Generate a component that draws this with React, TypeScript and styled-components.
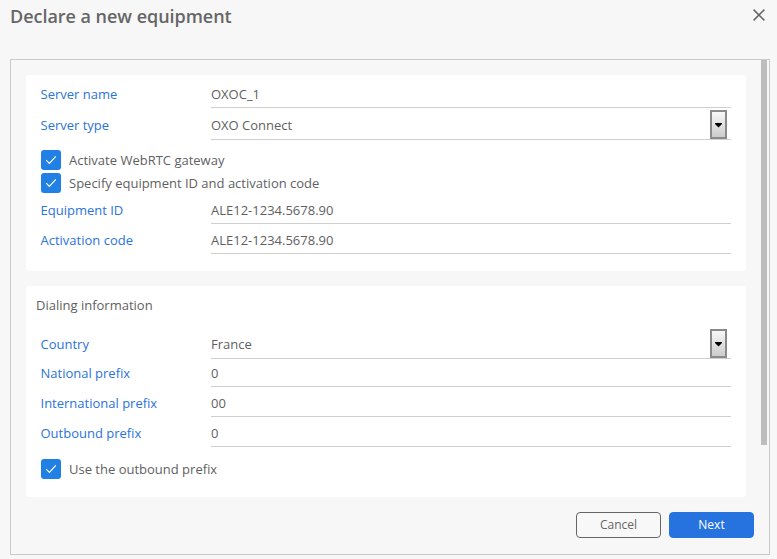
import React from 'react';
import styled, { createGlobalStyle } from 'styled-components';

const GlobalStyle = createGlobalStyle`
  html, body {
    margin: 0;
    padding: 0;
    background: #f7f7f7;
    overflow: hidden;
  }
  * {
    box-sizing: border-box;
  }
`;

const CheckRow = ({ label, top }: { label: string; top: number }) => (
  <Check $top={top}>
    <CheckBox>
      <svg width="12" height="10" viewBox="0 0 12 10" fill="none">
        <path d="M1.2 5.2 L4.4 8.4 L10.8 1.4" stroke="#fff" strokeWidth="1.2" />
      </svg>
    </CheckBox>
    <CheckLabel>{label}</CheckLabel>
  </Check>
);

const Field = ({ label, value, height, select }: { label: string; value: string; height: number; select?: boolean }) => (
  <Row $height={height}>
    <Label $select={select}>{label}</Label>
    <Value $select={select}>
      <span>{value}</span>
      {select && (
        <SelectButton>
          <svg width="7" height="5" viewBox="0 0 7 5">
            <path d="M0 0 H7 V1 L3.5 4.5 L0 1 Z" fill="#000" />
          </svg>
        </SelectButton>
      )}
    </Value>
  </Row>
);

const App = () => {
  return (
    <Page>
      <GlobalStyle />
      <Header>
        <Title>Declare a new equipment</Title>
        <CloseIcon width="12" height="12" viewBox="0 0 12 12">
          <path d="M0.6 0.6 L11.4 11.4 M11.4 0.6 L0.6 11.4" stroke="#666" strokeWidth="1.5" />
        </CloseIcon>
      </Header>
      <Panel>
        <ScrollThumb />
        <Content>
          <Card>
            <Field label="Server name" value="OXOC_1" height={33} />
            <Field label="Server type" value="OXO Connect" height={32} select />
            <Checks>
              <CheckRow label="Activate WebRTC gateway" top={10} />
              <CheckRow label="Specify equipment ID and activation code" top={3} />
            </Checks>
            <Field label="Equipment ID" value="ALE12-1234.5678.90" height={31} />
            <Field label="Activation code" value="ALE12-1234.5678.90" height={30} />
            <CardEnd $height={17} />
          </Card>
          <Card>
            <SectionTitle>Dialing information</SectionTitle>
            <Field label="Country" value="France" height={30} select />
            <Field label="National prefix" value="0" height={28} />
            <Field label="International prefix" value="00" height={30} />
            <Field label="Outbound prefix" value="0" height={30} />
            <CheckRow label="Use the outbound prefix" top={12} />
            <CardEnd $height={18} />
          </Card>
        </Content>
        <Footer>
          <CancelButton>Cancel</CancelButton>
          <NextButton>Next</NextButton>
        </Footer>
      </Panel>
    </Page>
  );
};
export default App;

const Page = styled.div`
  width: 777px;
  height: 559px;
  padding: 0 7px 4px 10px;
  background: #f7f7f7;
  font-family: "Open Sans", sans-serif;
  font-size: 13px;
  color: #5f5f5f;
`;

const Header = styled.div`
  height: 59px;
  padding-top: 4px;
  display: flex;
  justify-content: space-between;
  align-items: flex-start;
`;

const Title = styled.h1`
  margin: 0;
  font-size: 18px;
  line-height: 25px;
  font-weight: 600;
  letter-spacing: -0.03px;
  color: #666;
`;

const CloseIcon = styled.svg`
  margin: 5px 5px 0 0;
`;

const Panel = styled.div`
  position: relative;
  height: 496px;
  border: 1px solid #c9c9c9;
  display: flex;
  flex-direction: column;
`;

const ScrollThumb = styled.div`
  position: absolute;
  top: 0;
  right: 2px;
  width: 6px;
  height: 385px;
  background: #bdbdbd;
`;

const Content = styled.div`
  padding: 15px 23px 0 15px;
  display: flex;
  flex-direction: column;
  gap: 15px;
`;

const Card = styled.div`
  background: #fff;
  border-radius: 3px;
  padding: 0 15px;
`;

const CardEnd = styled.div<{ $height: number }>`
  height: ${({ $height }) => $height}px;
  margin: 0 -15px;
`;

const Row = styled.div<{ $height: number }>`
  height: ${({ $height }) => $height}px;
  display: flex;
  align-items: flex-end;
`;

const Label = styled.div<{ $select?: boolean }>`
  width: 170.5px;
  margin-left: -0.5px;
  line-height: 18px;
  margin-bottom: ${({ $select }) => ($select ? 6 : 5)}px;
  color: #2b74d8;
`;

const Value = styled.div<{ $select?: boolean }>`
  flex: 1;
  height: 100%;
  border-bottom: 1px solid #cfcfcf;
  display: flex;
  justify-content: space-between;
  align-items: flex-end;
  line-height: 18px;
  padding-right: 4px;
  span {
    margin-bottom: ${({ $select }) => ($select ? 5 : 4)}px;
  }
`;

const SelectButton = styled.div`
  width: 17px;
  height: 29px;
  border: 2px solid #8a8a8a;
  background: linear-gradient(#f8f8f8, #cccccc);
  display: flex;
  align-items: center;
  justify-content: center;
  padding-top: 2px;
`;

const Checks = styled.div`
  display: flex;
  flex-direction: column;
`;

const Check = styled.div<{ $top: number }>`
  margin-top: ${({ $top }) => $top}px;
  display: flex;
  align-items: center;
  gap: 8px;
  height: 20px;
`;

const CheckBox = styled.div`
  width: 20px;
  height: 20px;
  border-radius: 3px;
  background: #2180e3;
  display: flex;
  align-items: center;
  justify-content: center;
`;

const CheckLabel = styled.span`
  line-height: 18px;
`;

const SectionTitle = styled.div`
  margin-left: -5px;
  padding-top: 10px;
  height: 43px;
  line-height: 19px;
`;

const Footer = styled.div`
  margin-top: 15px;
  padding-right: 15px;
  display: flex;
  justify-content: flex-end;
  gap: 8px;
`;

const CancelButton = styled.button`
  width: 85px;
  height: 26px;
  padding: 0 0 2px;
  border: 1px solid #666;
  border-radius: 4px;
  background: #f8f8f8;
  color: #666;
  font: 12px "Open Sans", sans-serif;
`;

const NextButton = styled(CancelButton)`
  border-color: #2673e0;
  background: #2673e0;
  color: #fff;
`;
